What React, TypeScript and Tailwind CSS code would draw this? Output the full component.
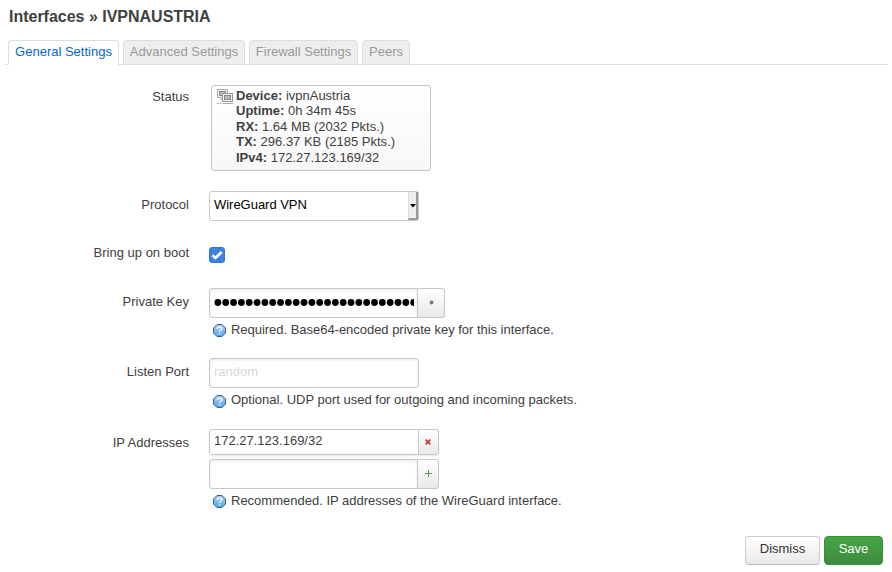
import type { ReactNode } from "react";

function Row({ label, className, children }: { label: string; className: string; children: ReactNode }) {
  return (
    <div className={`flex gap-5 ${className}`}>
      <div className="mt-1 w-[189px] shrink-0 text-right leading-5">{label}</div>
      <div>{children}</div>
    </div>
  );
}

function HelpIcon() {
  return (
    <svg width="13" height="13" viewBox="0 0 13 13" className="mt-1 shrink-0">
      <defs>
        <linearGradient id="help" x1="0" y1="0" x2="0" y2="1">
          <stop offset="0" stopColor="#b0d0f2" />
          <stop offset="1" stopColor="#58a6e8" />
        </linearGradient>
      </defs>
      <path d="M4 .5h5L12.5 4v5L9 12.5H4L.5 9V4Z" fill="url(#help)" stroke="#2f6296" />
      <path d="M4.4 4.9c0-2.4 4.3-2.4 4.3 0 0 1.5-2.1 1.4-2.1 2.8M6.6 8.8v1.4" fill="none" stroke="#fff" strokeWidth="1.2" />
    </svg>
  );
}

function Hint({ children }: { children: ReactNode }) {
  return (
    <div className="mt-[2px] ml-1 flex gap-[5px] whitespace-nowrap leading-5">
      <HelpIcon />
      <span>{children}</span>
    </div>
  );
}

function TunnelIcon() {
  return (
    <svg width="16" height="16" viewBox="0 0 16 16" shapeRendering="crispEdges" className="mt-[1px] shrink-0">
      <rect x=".5" y=".5" width="10" height="8" fill="#f4f4f4" stroke="#aaa" />
      <rect x="2.5" y="2.5" width="6" height="4" fill="#bbb" stroke="#888" />
      <path d="M3 10.5h2M0 14.5h5" stroke="#aaa" strokeDasharray="2 1" />
      <rect x="5.5" y="4.5" width="10" height="8" fill="#f4f4f4" stroke="#999" />
      <rect x="7.5" y="6.5" width="6" height="4" fill="#bbb" stroke="#888" />
      <path d="M6 14.5h10" stroke="#aaa" />
    </svg>
  );
}

const tabs = [
  { label: "General Settings", width: "w-[111px]" },
  { label: "Advanced Settings", width: "w-[122px]" },
  { label: "Firewall Settings", width: "w-[109px]" },
  { label: "Peers", width: "w-[48px]" },
];

const stats = [
  ["Device:", "ivpnAustria", "h-[15px]"],
  ["Uptime:", "0h 34m 45s", "h-4"],
  ["RX:", "1.64 MB (2032 Pkts.)", "h-[15px]"],
  ["TX:", "296.37 KB (2185 Pkts.)", "h-4"],
  ["IPv4:", "172.27.123.169/32", "h-4"],
];

const input = "border border-[#c8c8c8] bg-white px-1 shadow-[inset_0_1px_3px_rgba(0,0,0,0.1)] outline-none";
const addon = "flex items-center justify-center rounded-r-[3px] border border-l-0 border-[#c8c8c8] bg-linear-to-b from-white to-[#e9e9e9]";

export default function App() {
  return (
    <div className="h-[572px] w-[892px] overflow-hidden bg-white font-['Liberation_Sans',Arial,sans-serif] text-[13px] text-[#404040]">
      <h2 className="h-10 pt-[7px] pl-[9px] text-[16px] leading-5 font-bold tracking-[-0.01px]">Interfaces » IVPNAUSTRIA</h2>
      <div className="mr-1 ml-[5px] flex h-[25px] gap-1 border-b border-[#ddd] pl-[3px]">
        {tabs.map((tab, i) => (
          <div
            key={tab.label}
            className={`h-[25px] rounded-t-[4px] border text-center leading-[22px] whitespace-nowrap ${tab.width} ${
              i === 0 ? "border-[#ddd] border-b-white bg-white text-[#0069d6]" : "border-[#ddd] bg-[#eee] text-[#999]"
            }`}
          >
            {tab.label}
          </div>
        ))}
      </div>
      <Row label="Status" className="mt-5 h-[106px] [&>div:first-child]:mt-[2px]">
        <div className="ml-[2px] flex h-[86px] w-[220px] gap-[3px] rounded-[3px] border border-[#c5c5c5] bg-linear-to-b from-white to-[#f7f7f7] pt-[2px] pl-[5px]">
          <TunnelIcon />
          <div className="whitespace-nowrap">
            {stats.map(([name, value, height]) => (
              <div key={name} className={`leading-4 ${height}`}>
                <b>{name}</b> {value}
              </div>
            ))}
          </div>
        </div>
      </Row>
      <Row label="Protocol" className="h-[52px]">
        <div className="flex h-[30px] w-[210px] rounded-[3px] border border-[#c8c8c8] text-black">
          <div className="w-[198px] pl-1 leading-[26px] tracking-[-0.03px]">WireGuard VPN</div>
          <div className="flex w-[10px] items-center justify-center border-r-2 border-b-2 border-l border-[#999] border-l-[#ddd] bg-[#efefef]">
            <svg width="6" height="4" viewBox="0 0 6 4" className="mt-px shrink-0"><path d="M0 0h6L3 3.5Z" /></svg>
          </div>
        </div>
      </Row>
      <Row label="Bring up on boot" className="h-[45px] [&>div:first-child]:mt-0">
        <div className="mt-1 h-4 w-4 rounded-[3px] border border-[#3274d0] bg-[#3d82de]">
          <svg width="14" height="14" viewBox="0 0 14 14"><path d="m2.4 7.3 3 2.6 6.3-5.8" fill="none" stroke="#fff" strokeWidth="2.7" /></svg>
        </div>
      </Row>
      <Row label="Private Key" className="h-[70px]">
        <div className="flex h-[30px]">
          <div className={`w-[209px] rounded-l-[3px] ${input}`}>
            <svg width="200" height="28" viewBox="0 0 200 28">
              {Array.from({ length: 26 }, (_, i) => (
                <circle key={i} cx={3.9 + i * 7.83} cy="13.5" r="3.4" fill="#000" />
              ))}
            </svg>
          </div>
          <div className={`w-[27px] ${addon}`}>
            <svg width="5" height="5" viewBox="0 0 5 5" className="-mt-px"><circle cx="2.5" cy="2.5" r="1.9" fill="#777" /></svg>
          </div>
        </div>
        <Hint><span className="tracking-[-0.03px]">Required. Base64-encoded private key for this interface.</span></Hint>
      </Row>
      <Row label="Listen Port" className="h-[71px] [&_svg]:mt-[5px]">
        <input placeholder="random" className={`block h-[30px] w-[210px] rounded-[3px] pb-1 placeholder:text-[#d9d9d9] ${input}`} />
        <Hint>Optional. UDP port used for outgoing and incoming packets.</Hint>
      </Row>
      <Row label="IP Addresses" className="h-[107px]">
        <div className="mb-1 flex h-[26px] w-fit rounded-[3px] shadow-[0_1px_2px_rgba(0,0,0,0.1)]">
          <div className="w-[210px] rounded-l-[3px] border border-[#c8c8c8] bg-white pl-1 leading-[22px]">172.27.123.169/32</div>
          <div className={`w-5 pr-px ${addon}`}>
            <svg width="6" height="6" viewBox="0 0 6 6"><path d="m.7.7 4.6 4.6M5.3.7.7 5.3" stroke="#c43c35" strokeWidth="1.8" /></svg>
          </div>
        </div>
        <div className="flex h-[30px]">
          <div className={`w-[209px] rounded-l-[3px] ${input}`} />
          <div className={`w-[21px] pb-px ${addon}`}>
            <svg width="7" height="7" viewBox="0 0 7 7"><path d="M3.5 0v7M0 3.5h7" stroke="#46a546" /></svg>
          </div>
        </div>
        <Hint>Recommended. IP addresses of the WireGuard interface.</Hint>
      </Row>
      <div className="flex justify-end gap-1 pr-[9px]">
        <button className="h-[29px] w-[75px] rounded-[4px] border border-[#ccc] border-b-[#bbb] bg-linear-to-b from-white to-[#e9e9e9] pb-[3px] text-[#333]">Dismiss</button>
        <button className="h-[29px] w-[59px] rounded-[4px] border border-[#3d8b3d] bg-linear-to-b from-[#46a546] to-[#3d8b3d] pb-[3px] text-white">Save</button>
      </div>
    </div>
  );
}
